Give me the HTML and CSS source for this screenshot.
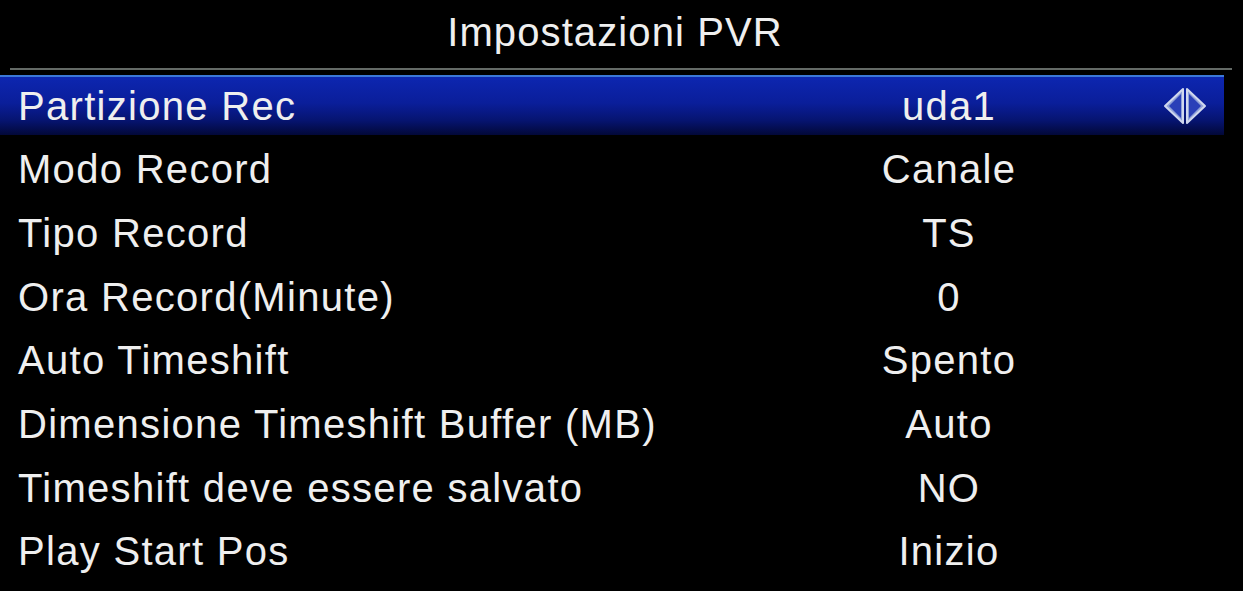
FILE: index.html
```html
<!DOCTYPE html>
<html lang="it">
<head>
    <meta charset="UTF-8">
    <title>Impostazioni PVR</title>
    <link rel="stylesheet" href="styles.css">
</head>
<body>
    <header class="title">Impostazioni PVR</header>
    <div class="rule"></div>

    <ul class="menu">
        <li class="row selected">
            <span class="label">Partizione Rec</span>
            <span class="value">uda1</span>
            <span class="arrows">
                <svg width="46" height="38" viewBox="0 0 46 38">
                    <polygon points="21,2 3,19 21,36" fill="#8fa0d8" stroke="#d0d8ee" stroke-width="2" stroke-linejoin="round"/>
                    <polygon points="25,2 43,19 25,36" fill="#8fa0d8" stroke="#d0d8ee" stroke-width="2" stroke-linejoin="round"/>
                    <polygon points="19,7 7,19 19,31" fill="#2a40b8"/>
                    <polygon points="27,7 39,19 27,31" fill="#2a40b8"/>
                </svg>
            </span>
        </li>
        <li class="row"><span class="label">Modo Record</span><span class="value">Canale</span></li>
        <li class="row"><span class="label">Tipo Record</span><span class="value">TS</span></li>
        <li class="row"><span class="label">Ora Record(Minute)</span><span class="value">0</span></li>
        <li class="row"><span class="label">Auto Timeshift</span><span class="value">Spento</span></li>
        <li class="row"><span class="label">Dimensione Timeshift Buffer (MB)</span><span class="value">Auto</span></li>
        <li class="row"><span class="label">Timeshift deve essere salvato</span><span class="value">NO</span></li>
        <li class="row"><span class="label">Play Start Pos</span><span class="value">Inizio</span></li>
    </ul>
</body>
</html>
```

FILE: styles.css
```css
body {
    margin: 0;
    background-color: #000;
    color: #efefef;
    font-family: "Liberation Sans", Arial, sans-serif;
    overflow: hidden;
}
.title {
    height: 68px;
    line-height: 64px;
    text-align: center;
    font-size: 40px;
    letter-spacing: 1.1px;
    padding-right: 13px;
}
.rule {
    height: 2px;
    margin: 0 11px 0 10px;
    background-color: #646a66;
}
.menu {
    list-style: none;
    margin: 5px 0 0 0;
    padding: 0;
    width: 1224px;
}
.row {
    display: flex;
    align-items: center;
    height: 63.7px;
    font-size: 40px;
    letter-spacing: 1.3px;
}
.label {
    width: 831px;
    padding-left: 18px;
}
.value {
    width: 200px;
    text-align: center;
}
.arrows {
    flex: 1;
    display: flex;
    justify-content: flex-end;
    padding-right: 16px;
}
.arrows svg {
    display: block;
}
.selected {
    height: 58px;
    margin-bottom: 3px;
    border-top: 2px solid #3b78d8;
    background: linear-gradient(to bottom, #0d26b0 0%, #0a1e9a 45%, #061470 75%, #020838 100%);
}
```
